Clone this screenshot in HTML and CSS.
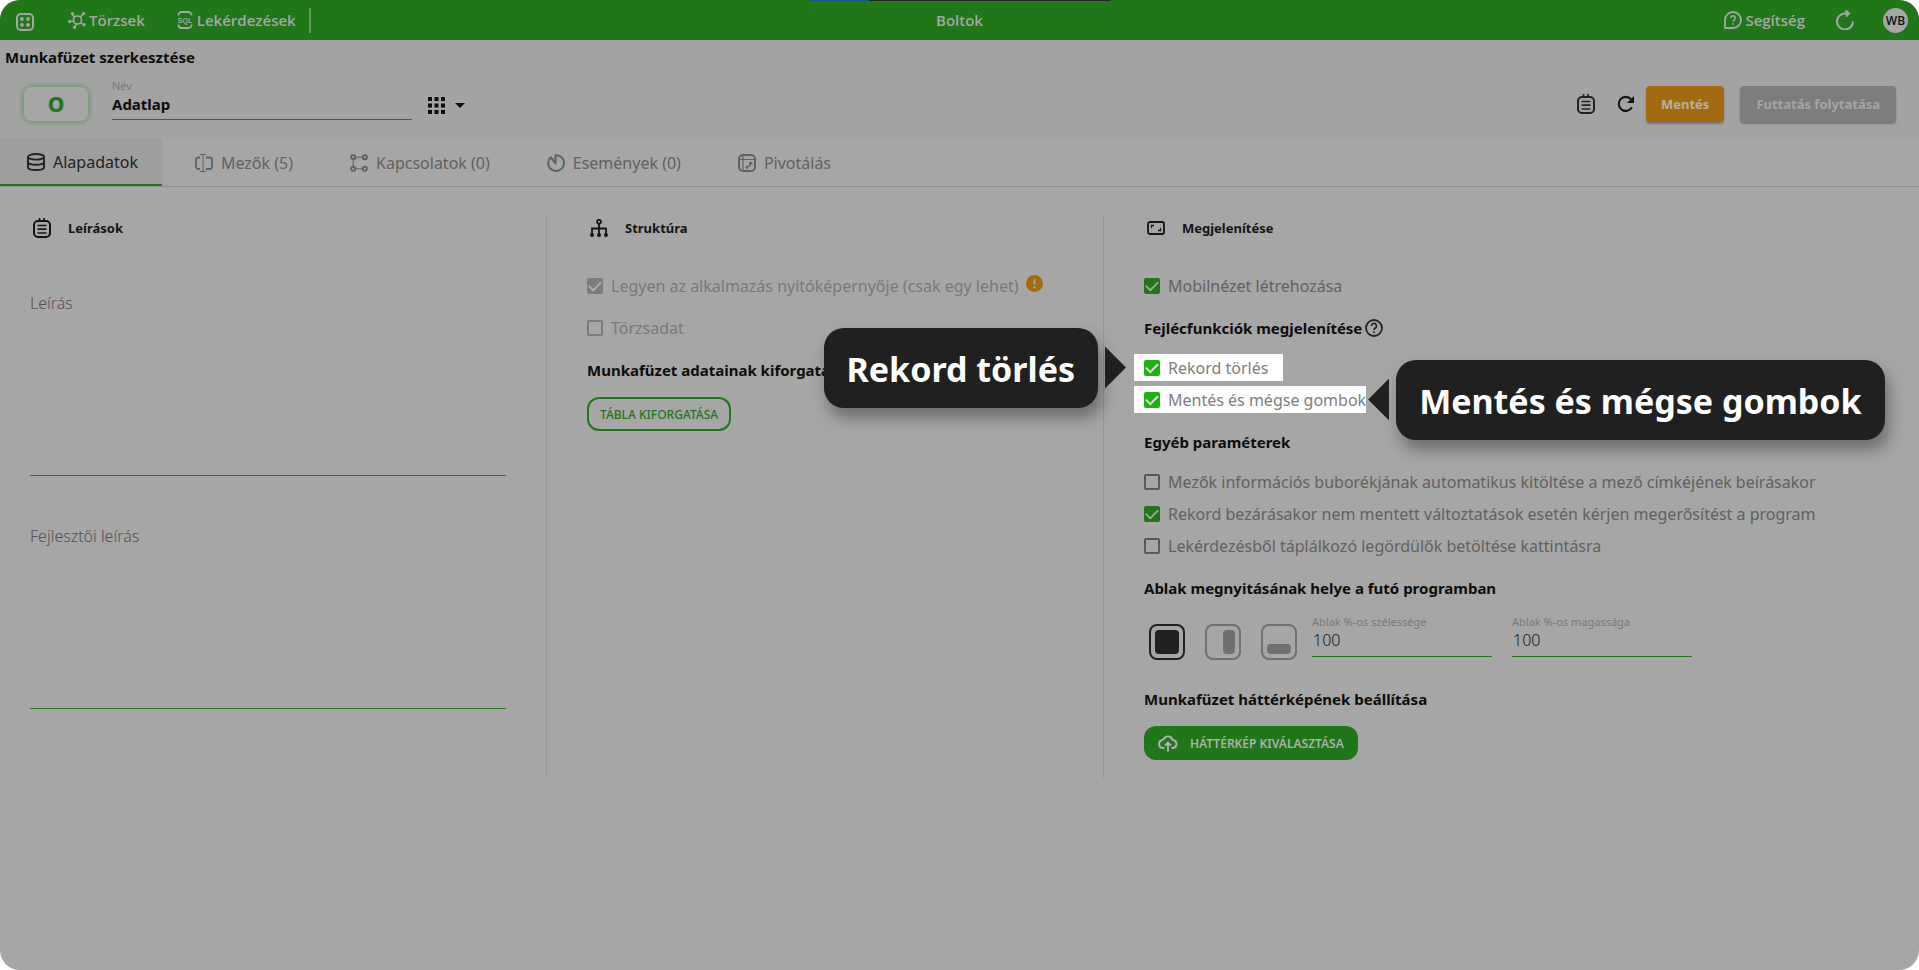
FILE: index.html
```html
<!DOCTYPE html>
<html lang="hu">
<head>
<meta charset="utf-8">
<title>Boltok</title>
<link rel="stylesheet" href="styles.css">
</head>
<body>
<div class="app">
  <div class="loader"><span class="loader-done"></span></div>
  <header class="topbar">
    <nav class="topbar-side">
      <a class="nav-home" href="#" aria-label="Főmenü">
        <svg class="ic" viewBox="0 0 18 18"><rect x="1" y="1" width="16" height="16" rx="4" fill="none" stroke="currentColor" stroke-width="2"/><g fill="currentColor"><circle cx="6" cy="6" r="1.9"/><circle cx="12" cy="6" r="1.9"/><circle cx="6" cy="12" r="1.9"/><circle cx="12" cy="12" r="1.9"/></g></svg>
      </a>
      <a class="nav-link nav-master" href="#">
        <svg class="ic" viewBox="0 0 18 18"><g fill="none" stroke="currentColor" stroke-width="1.6"><circle cx="9.5" cy="9" r="4"/><path d="M6.500 6.500 4.500 3M12.500 6 15 3M12.500 11.500l2.500 2M8 13l-1 3M5.500 10 2 10.500"/></g><g fill="currentColor"><circle cx="4.500" cy="2.500" r="1.600"/><circle cx="15.700" cy="2.500" r="1.600"/><circle cx="16" cy="13.700" r="1.600"/><circle cx="6.500" cy="16.300" r="1.600"/><circle cx="1.600" cy="10.500" r="1.600"/></g></svg>
        Törzsek
      </a>
      <a class="nav-link nav-query" href="#">
        <svg class="ic" viewBox="0 0 18 18"><path d="M2.500 4.500V4a3 3 0 0 1 3-3h7a3 3 0 0 1 3 3v.500M2.500 13.500v.500a3 3 0 0 0 3 3h7a3 3 0 0 0 3-3v-.500" fill="none" stroke="currentColor" stroke-width="1.800"/><text class="sql" x="9" y="11.500" text-anchor="middle">SQL</text></svg>
        Lekérdezések
      </a>
      <span class="nav-rule"></span>
    </nav>
    <h1 class="app-name">Boltok</h1>
    <div class="topbar-side topbar-right">
      <a class="nav-link" href="#">
        <svg class="ic" viewBox="0 0 18 18" fill="none" stroke="currentColor"><path d="M9 1a8 8 0 1 1 0 16H1V9a8 8 0 0 1 8-8z" stroke-width="1.800"/><path d="M6.800 7a2.200 2.200 0 1 1 3.500 1.800c-.9.600-1.300 1-1.300 2M9 12.200v1.600" stroke-width="1.600"/></svg>
        Segítség
      </a>
      <button class="icon-btn nav-reload" aria-label="Frissítés"><svg class="ic ic-reload" viewBox="0 0 18 20" fill="none" stroke="currentColor" stroke-width="2"><path d="M12 3.400H9.500A8 8 0 1 0 17 11.500"/><path d="M9.500.500 13 3.400 10 6.600"/></svg></button>
      <button class="avatar">WB</button>
    </div>
  </header>

  <section class="sheet-head">
    <h2 class="sheet-title">Munkafüzet szerkesztése</h2>
    <div class="sheet-row">
      <span class="badge">O</span>
      <div class="name-field">
        <label class="mini-label" for="name">Név</label>
        <input class="name-input" id="name" type="text" value="Adatlap">
      </div>
      <button class="icon-btn icon-picker" aria-label="Ikon választása">
        <svg class="ic ic-grid" viewBox="0 0 17 17" fill="currentColor"><path d="M0 0h4v4H0zM6.500 0h4v4h-4zM13 0h4v4h-4zM0 6.500h4v4H0zM6.500 6.500h4v4h-4zM13 6.500h4v4h-4zM0 13h4v4H0zM6.500 13h4v4h-4zM13 13h4v4h-4z"/></svg>
        <svg class="ic-caret" viewBox="0 0 10 5" fill="currentColor"><path d="M0 0h10L5 5z"/></svg>
      </button>
      <div class="sheet-actions">
        <button class="icon-btn" aria-label="Jegyzet"><svg class="ic ic-note" viewBox="0 0 18 20" fill="none" stroke="currentColor" stroke-width="2"><rect x="1" y="3" width="16" height="16" rx="4"/><path d="M4.500 7.500h9M4.500 11.200h9M4.500 15h9M6.500 0v3M11 0v3" stroke-width="1.700"/></svg></button>
        <button class="icon-btn action-reload" aria-label="Újratöltés"><svg class="ic" viewBox="0 0 18 18"><path d="M14.900 12.200A7 7 0 1 1 14 4.200" fill="none" stroke="currentColor" stroke-width="2.100"/><path d="M17 1v7h-7z" fill="currentColor"/></svg></button>
        <button class="btn btn-save">Mentés</button>
        <button class="btn btn-run" disabled>Futtatás folytatása</button>
      </div>
    </div>
  </section>

  <nav class="tabs">
    <a class="tab tab-active" href="#"><svg class="ic" viewBox="0 0 18 18" fill="none" stroke="currentColor" stroke-width="1.900"><ellipse cx="9" cy="3.800" rx="8" ry="2.800"/><path d="M1 3.800v10.400C1 15.900 4.500 17 9 17s8-1.100 8-2.800V3.800M1 9c0 1.600 3.500 2.700 8 2.700S17 10.600 17 9"/></svg>Alapadatok</a>
    <a class="tab" href="#"><svg class="ic" viewBox="0 0 18 18" fill="none" stroke="currentColor"><path d="M5 3.500H3.500A2.500 2.500 0 0 0 1 6v6.500A2.500 2.500 0 0 0 3.500 15H5M11 3.500h3.500A2.500 2.500 0 0 1 17 6v6.500a2.500 2.500 0 0 1-2.500 2.500H11" stroke-width="1.800"/><path d="M8 .5v17M5 .5h6M5 17.500h6"/></svg>Mezők (5)</a>
    <a class="tab" href="#"><svg class="ic" viewBox="0 0 18 18" fill="none" stroke="currentColor"><g stroke-width="1.900"><circle cx="3.200" cy="3.200" r="2.100"/><circle cx="14.800" cy="3.200" r="2.100"/><circle cx="3.200" cy="14.800" r="2.100"/><circle cx="14.800" cy="14.800" r="2.100"/></g><path d="M6 3.200h6M6 14.800h6M3.200 6v6"/></svg>Kapcsolatok (0)</a>
    <a class="tab" href="#"><svg class="ic" viewBox="0 0 18 18" fill="none" stroke="currentColor" stroke-width="2"><path d="M8.500 9.500V1.200a7.900 7.900 0 1 1-4.700 2L8.500 9.500z" stroke-linejoin="round"/></svg>Események (0)</a>
    <a class="tab" href="#"><svg class="ic" viewBox="0 0 18 18" fill="none" stroke="currentColor"><rect x="1" y="1" width="16" height="16" rx="4" stroke-width="2"/><path d="M1 5.500h16M5 1v16" stroke-width="1.200"/><path d="M8 13.300c3 0 4.800-1.800 4.800-4.800M9.800 11.300l-1.900 2 1.900 1.700M11 10l1.800-1.900L14.500 10" stroke-width="1.200"/></svg>Pivotálás</a>
  </nav>

  <main class="columns">
    <section class="col">
      <h3 class="col-head"><svg class="ic ic-note" viewBox="0 0 18 20" fill="none" stroke="currentColor" stroke-width="2"><rect x="1" y="3" width="16" height="16" rx="4"/><path d="M4.500 7.500h9M4.500 11.200h9M4.500 15h9M6.500 0v3M11 0v3" stroke-width="1.700"/></svg>Leírások</h3>
      <div class="memo">
        <label class="memo-label" for="desc">Leírás</label>
        <textarea class="memo-input" id="desc"></textarea>
      </div>
      <div class="memo">
        <label class="memo-label" for="devdesc">Fejlesztői leírás</label>
        <textarea class="memo-input" id="devdesc"></textarea>
      </div>
    </section>

    <section class="col col-ruled">
      <h3 class="col-head"><svg class="ic" viewBox="0 0 18 18" fill="none" stroke="currentColor" stroke-width="1.800"><circle cx="9" cy="2.800" r="2"/><path d="M9 5v10M2 15V9.500h14V15"/><g fill="currentColor" stroke="none"><circle cx="2" cy="16" r="2"/><circle cx="9" cy="16" r="2"/><circle cx="16" cy="16" r="2"/></g></svg>Struktúra</h3>
      <div class="stack">
        <div class="line">
          <label class="option option-off"><input class="tick" type="checkbox" checked disabled>Legyen az alkalmazás nyitóképernyője (csak egy lehet)</label>
          <svg class="warn" viewBox="0 0 17 17"><circle cx="8.500" cy="8.500" r="8.500" fill="#a36b0f"/><path d="M8.500 4v5.500M8.500 11.300v2" stroke="#a6a6a6" stroke-width="2"/></svg>
        </div>
        <label class="option option-off option-master"><input class="tick" type="checkbox" disabled>Törzsadat</label>
        <h4 class="sub">Munkafüzet adatainak kiforgatása</h4>
        <button class="pill pill-outline">TÁBLA KIFORGATÁSA</button>
      </div>
    </section>

    <section class="col col-ruled">
      <h3 class="col-head"><svg class="ic" viewBox="0 0 18 18" fill="none" stroke="currentColor"><rect x="1" y="3" width="16" height="12" rx="2" stroke-width="1.800"/><path d="M4.500 9V6.500H7M13.500 9v2.500H11" stroke-width="1.300"/></svg>Megjelenítése</h3>
      <div class="stack">
        <label class="option"><input class="tick" type="checkbox" checked>Mobilnézet létrehozása</label>
        <h4 class="sub">Fejlécfunkciók megjelenítése<svg class="ic" viewBox="0 0 18 18" fill="none" stroke="currentColor"><circle cx="9" cy="9" r="8" stroke-width="1.800"/><path d="M6.500 7a2.500 2.500 0 1 1 3.800 2C9.400 9.600 9 10 9 11M9 12.300V14" stroke-width="1.600"/></svg></h4>
        <div class="options">
          <div class="spot spot-delete">
            <label class="option"><input class="tick" type="checkbox" checked>Rekord törlés</label>
            <div class="tip tip-left"><span class="tip-box">Rekord törlés</span><span class="tip-arrow"></span></div>
          </div>
          <div class="spot">
            <label class="option"><input class="tick" type="checkbox" checked>Mentés és mégse gombok</label>
            <div class="tip tip-right"><span class="tip-arrow"></span><span class="tip-box">Mentés és mégse gombok</span></div>
          </div>
        </div>
        <h4 class="sub">Egyéb paraméterek</h4>
        <div class="options">
          <label class="option"><input class="tick" type="checkbox">Mezők információs buborékjának automatikus kitöltése a mező címkéjének beírásakor</label>
          <label class="option"><input class="tick" type="checkbox" checked>Rekord bezárásakor nem mentett változtatások esetén kérjen megerősítést a program</label>
          <label class="option"><input class="tick" type="checkbox">Lekérdezésből táplálkozó legördülők betöltése kattintásra</label>
        </div>
        <h4 class="sub">Ablak megnyitásának helye a futó programban</h4>
        <div class="window-row">
          <button class="place place-on" aria-label="Teljes ablak"><svg class="place-ic" viewBox="0 0 36 36"><rect x="1" y="1" width="34" height="34" rx="7" fill="none" stroke="currentColor" stroke-width="2"/><rect x="6" y="6" width="24" height="24" rx="4" fill="currentColor"/></svg></button>
          <button class="place" aria-label="Jobb oldal"><svg class="place-ic" viewBox="0 0 36 36"><rect x="1" y="1" width="34" height="34" rx="7" fill="none" stroke="currentColor" stroke-width="2"/><rect x="18" y="6" width="12" height="24" rx="4" fill="currentColor"/></svg></button>
          <button class="place" aria-label="Alsó rész"><svg class="place-ic" viewBox="0 0 36 36"><rect x="1" y="1" width="34" height="34" rx="7" fill="none" stroke="currentColor" stroke-width="2"/><rect x="6" y="20" width="24" height="10" rx="4" fill="currentColor"/></svg></button>
          <div class="size-field"><label class="mini-label" for="w">Ablak %-os szélessége</label><input class="size-input" id="w" type="text" value="100"></div>
          <div class="size-field"><label class="mini-label" for="h">Ablak %-os magassága</label><input class="size-input" id="h" type="text" value="100"></div>
        </div>
        <h4 class="sub">Munkafüzet háttérképének beállítása</h4>
        <button class="pill pill-solid"><svg class="ic ic-cloud" viewBox="0 0 20 18" fill="none" stroke="currentColor" stroke-width="1.900"><path d="M6.500 14H5a4 4 0 0 1-.8-7.900C4.700 5 5.300 5 6 5a4.500 4.500 0 0 1 8.500 1.100h.8A4 4 0 0 1 15 14h-1.500M10 17.500V9M7 11.500 10 8.500l3 3"/></svg>HÁTTÉRKÉP KIVÁLASZTÁSA</button>
      </div>
    </section>
  </main>
</div>
</body>
</html>
```
FILE: styles.css
```css
:root {
  --green: #21761a;
  --page: #a6a6a6;
  --ink: #0d0d0d;
  --icon: #222222;
  --muted: #616161;
  --faint: #787878;
}

* { box-sizing: border-box; }

body {
  margin: 0;
  background: #ffffff;
  font-family: "Noto Sans", "Open Sans", sans-serif;
  font-size: 16px;
  color: var(--ink);
}

h1, h2, h3, h4 { margin: 0; }
a { color: inherit; text-decoration: none; }
button, input, textarea { font: inherit; color: inherit; }
button { border: 0; cursor: pointer; }

.app {
  position: relative;
  min-height: 100vh;
  background: var(--page);
  border-radius: 20px;
  overflow: hidden;
}

.ic { width: 18px; height: 18px; flex: none; }
.ic-reload, .ic-note { height: 20px; }
.icon-btn { display: flex; align-items: center; padding: 0; background: none; }

.loader {
  position: absolute;
  top: 0;
  left: 50%;
  width: 302px;
  height: 1px;
  margin-left: -151px;
  background: #222222;
}
.loader-done { display: block; width: 60px; height: 1px; background: #12588c; }

.topbar {
  display: grid;
  grid-template-columns: 1fr auto 1fr;
  align-items: center;
  height: 40px;
  padding: 0 11px;
  background: var(--green);
  color: var(--page);
  font-family: "Open Sans", "Noto Sans", sans-serif;
  font-size: 15px;
}
.topbar-side { display: flex; align-items: center; }
.topbar-right { justify-content: flex-end; }
.nav-home { display: flex; margin-right: 34px; padding: 4px 0 0 5px; }
.nav-link { display: flex; align-items: center; gap: 3px; font-weight: 600; }
.nav-query { margin: 0 13px 0 31px; }
.nav-rule { width: 2px; height: 25px; background: #5f9a5a; }
.sql { font: 700 7px "Liberation Sans", sans-serif; fill: currentColor; }
.app-name { font-size: 15px; font-weight: 600; }
.nav-reload { margin: 0 29px 0 31px; color: var(--page); }
.avatar {
  width: 25px;
  height: 25px;
  padding: 0;
  border-radius: 50%;
  background: var(--page);
  color: #111111;
  font-size: 12px;
  font-weight: 600;
}

.sheet-head { height: 98px; padding: 5px 23px 0 5px; background: #a3a3a3; }
.sheet-title { font-size: 15px; line-height: 24px; font-weight: 700; }
.sheet-row { display: flex; align-items: flex-start; padding: 10px 0 0 19px; }
.badge {
  width: 64px;
  height: 34px;
  margin-top: 8px;
  border-radius: 8px;
  background: var(--page);
  box-shadow: 0 0 6px #4f8f4a;
  color: var(--green);
  font-size: 21px;
  line-height: 34px;
  font-weight: 800;
  text-align: center;
}
.name-field { width: 300px; margin-left: 24px; }
.mini-label { display: block; font-size: 11px; line-height: 14px; color: var(--faint); }
.name-input {
  display: block;
  width: 100%;
  height: 27px;
  padding: 0 0 5px;
  border: 0;
  border-bottom: 1px solid var(--green);
  background: none;
  font-size: 15px;
  font-weight: 700;
}
.icon-picker { gap: 10px; margin: 18px 0 0 16px; }
.ic-grid { width: 17px; height: 17px; }
.ic-caret { width: 10px; height: 5px; }
.sheet-actions { display: flex; align-items: center; margin: 7px 0 0 auto; color: var(--icon); }
.action-reload { margin: 0 11px 0 22px; color: #111111; }
.btn {
  height: 36px;
  padding: 0 16px;
  border-radius: 4px;
  box-shadow: 0 2px 2px #777777;
  font-size: 13px;
  font-weight: 700;
}
.btn-save { padding: 0 15px; background: #a36b0f; color: #b5b0a5; }
.btn-run { margin-left: 16px; background: #7b7e7a; color: #a6a6a6; }

.tabs { display: flex; height: 49px; border-bottom: 1px solid #8f8f8f; color: var(--muted); }
.tab { display: flex; align-items: center; gap: 8px; height: 48px; padding: 2px 24px 0 33px; }
.tab-active {
  padding-left: 27px;
  background: #9e9e9e;
  border-bottom: 2px solid var(--green);
  color: var(--icon);
}

.columns { display: grid; grid-template-columns: 546fr 557fr 816fr; padding-top: 30px; }
.col { min-height: 561px; padding: 0 40px 0 30px; }
.col-ruled { border-left: 1px solid #959595; padding-left: 40px; padding-right: 20px; }
.col-head {
  display: flex;
  align-items: center;
  gap: 17px;
  height: 22px;
  padding-left: 3px;
  color: #141414;
  font-size: 13px;
  font-weight: 700;
}

.memo { margin-top: 52px; }
.memo + .memo { margin-top: 48px; }
.memo-label { display: block; line-height: 24px; font-weight: 300; color: #505050; }
.memo-input {
  display: block;
  width: 100%;
  height: 161px;
  padding: 4px 0;
  border: 0;
  border-bottom: 1px solid var(--green);
  background: none;
  resize: none;
}

.stack { display: flex; flex-direction: column; align-items: flex-start; padding-top: 33px; }
.options { display: flex; flex-direction: column; align-items: flex-start; gap: 5px; }
.option { display: flex; align-items: center; gap: 8px; height: 27px; color: var(--muted); white-space: nowrap; }
.option-off { color: var(--faint); }
.option-master { margin-top: 15px; }
.line { display: flex; align-items: flex-start; gap: 7px; }
.warn { width: 17px; height: 17px; margin-top: 3px; }

.tick {
  appearance: none;
  width: 16px;
  height: 16px;
  margin: 0;
  border: 2px solid #595959;
  border-radius: 2px;
}
.tick:disabled { border-color: #7c7c7c; }
.tick:checked { display: grid; place-items: center; border: 0; background: var(--green); }
.tick:checked:disabled { background: #7c7c7c; }
.tick:checked::after {
  content: "";
  width: 11px;
  height: 6px;
  margin-bottom: 3px;
  border: solid #c4c4c4;
  border-width: 0 0 1px 1px;
  box-shadow: inset 1px -1px 0 -0px rgba(196, 196, 196, 0.4);
  transform: rotate(-45deg);
}

.sub {
  display: flex;
  align-items: center;
  gap: 3px;
  height: 32px;
  margin: 13px 0 10px;
  font-size: 15px;
  font-weight: 700;
  white-space: nowrap;
}
.sub .ic { color: var(--icon); }

.spot { position: relative; margin-left: -10px; padding-left: 10px; background: #ffffff; }
.spot .option { color: #808080; }
.spot .tick:checked { background: #21b013; }
.spot .tick:checked::after { border-color: #ffffff; box-shadow: inset 1px -1px 0 rgba(255, 255, 255, 0.6); }
.spot-delete { padding-right: 15px; }

.tip { position: absolute; top: 50%; z-index: 2; display: flex; align-items: center; gap: 7px; height: 80px; margin-top: -40px; }
.tip-left { right: calc(100% + 8px); }
.tip-right { left: calc(100% + 2px); }
.tip-box {
  padding: 2px 23px 0;
  border-radius: 20px;
  background: #202020;
  box-shadow: 4px 10px 16px rgba(0, 0, 0, 0.35);
  color: #ffffff;
  font-size: 34px;
  line-height: 78px;
  font-weight: 700;
  white-space: nowrap;
}
.tip-arrow { width: 21px; height: 42px; background: #202020; clip-path: polygon(0 0, 100% 50%, 0 100%); }
.tip-right .tip-arrow { clip-path: polygon(100% 0, 0 50%, 100% 100%); }

.window-row { display: flex; align-items: flex-start; gap: 20px; padding: 0 0 10px 5px; }
.place { padding: 10px 0 0; background: none; color: #707070; }
.place-on { color: #202020; }
.place-ic { display: block; width: 36px; height: 36px; }
.size-field { width: 180px; padding-top: 1px; }
.place + .size-field { margin-left: -5px; }
.size-input {
  display: block;
  width: 100%;
  height: 28px;
  padding: 0 0 5px 1px;
  border: 0;
  border-bottom: 1px solid var(--green);
  background: none;
  color: #161616;
  font-weight: 300;
}

.pill { height: 34px; margin-top: 1px; border-radius: 12px; font-size: 12px; font-weight: 500; }
.pill-outline { padding: 0 11px; border: 2px solid var(--green); background: none; color: var(--green); }
.pill-solid { display: flex; align-items: center; gap: 12px; padding: 0 14px; background: var(--green); color: #b0b0b0; font-weight: 600; }
.ic-cloud { width: 20px; }
```
